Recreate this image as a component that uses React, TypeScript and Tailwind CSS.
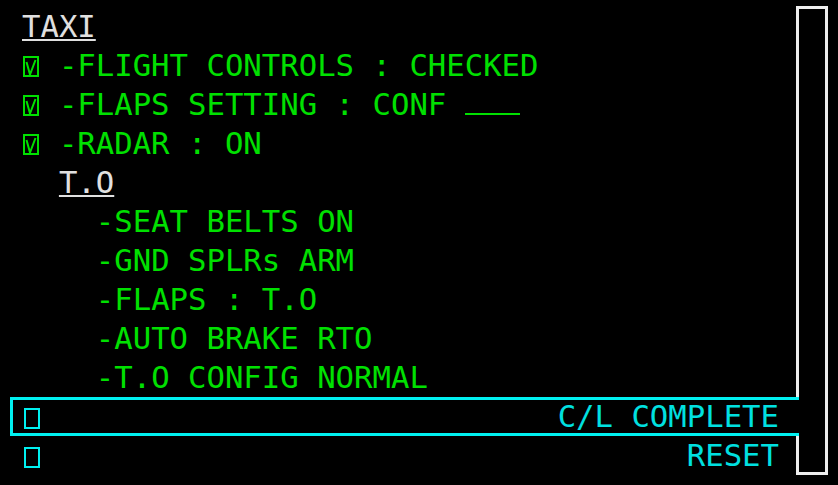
import React from "react";

const GREEN = "text-[#00e000]";

function CheckBox() {
  return (
    <span className="inline-block w-[1ch] h-[21px] align-[-1px]">
      <svg width="17" height="21" viewBox="0 0 17 21" className="block ml-[1px]">
        <rect x="1" y="1" width="14" height="19" fill="none" stroke="#00e000" strokeWidth="2" />
        <path d="M3.5 6 L7 18.5 L12.5 4" fill="none" stroke="#00e000" strokeWidth="2" />
      </svg>
    </span>
  );
}

function EmptyBox() {
  return (
    <span className="inline-block w-[1ch] h-[21px] align-[-2px]">
      <span className="ml-[2px] block w-[16px] h-[21px] border-[2.5px] border-[#00f0f0]" />
    </span>
  );
}

export default function App() {
  const tasks = ["-SEAT BELTS ON", "-GND SPLRs ARM", "-FLAPS : T.O", "-AUTO BRAKE RTO", "-T.O CONFIG NORMAL"];

  return (
    <div
      className="w-[838px] h-[485px] bg-black flex overflow-hidden text-[30.65px] leading-[39px]"
      style={{ fontFamily: '"DejaVu Sans Mono", monospace' }}
    >
      <div className="w-[796px] pt-[7px] flex flex-col whitespace-pre">
        {/* taxi section */}
        <div className="pl-[22px] text-[#e0e0e0]">
          <span className="underline decoration-2 underline-offset-[2px]">TAXI</span>
        </div>
        <div className={`pl-[22px] ${GREEN}`}>
          <CheckBox /> -FLIGHT CONTROLS : CHECKED
        </div>
        <div className={`pl-[22px] ${GREEN}`}>
          <CheckBox /> -FLAPS SETTING : CONF <span className="inline-block w-[3ch] h-[2px] bg-[#00e000]" />
        </div>
        <div className={`pl-[22px] ${GREEN}`}>
          <CheckBox /> -RADAR : ON
        </div>

        {/* take off section */}
        <div className="pl-[22px] text-[#e0e0e0]">
          {"  "}
          <span className="underline decoration-2 underline-offset-[2px]">T.O</span>
        </div>
        {tasks.map((t) => (
          <div key={t} className={`pl-[22px] ${GREEN}`}>
            {"    "}
            {t}
          </div>
        ))}

        {/* bottom actions */}
        <div className="relative z-10 ml-[10px] -mr-[3px] h-[39px] border-l-[3px] border-y-[3px] border-[#00f0f0] pl-[9px] pr-[20px] leading-[33px] flex justify-between text-[#00e0e0]">
          <span>
            <EmptyBox />
          </span>
          <span>C/L COMPLETE</span>
        </div>
        <div className="pl-[22px] pr-[17px] flex justify-between text-[#00e0e0]">
          <span>
            <EmptyBox />
          </span>
          <span>RESET</span>
        </div>
      </div>

      {/* scroll bar */}
      <div className="w-[32px] mt-[6px] flex flex-col">
        <div className="h-[391px] border-t-[3px] border-x-[3px] border-[#eeeeee]" />
        <div className="h-[39px] border-r-[3px] border-[#eeeeee]" />
        <div className="h-[39px] border-b-[3px] border-x-[3px] border-[#eeeeee]" />
      </div>
    </div>
  );
}
